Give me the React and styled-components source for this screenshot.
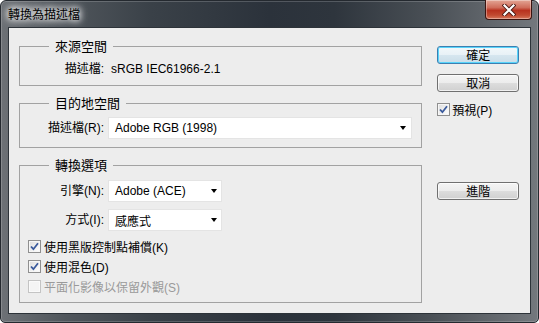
import styled, { createGlobalStyle } from "styled-components";

const GlobalStyle = createGlobalStyle`
  body {
    margin: 0;
    background: #ffffff;
    font-family: "Liberation Sans", "Noto Sans CJK TC", sans-serif;
  }
`;

const Window = styled.div`
  width: 539px;
  height: 323px;
  box-sizing: border-box;
  display: flex;
  flex-direction: column;
  padding: 0 7px 8px 7px;
  border: 1px solid #24292f;
  border-radius: 6px 6px 5px 5px;
  background: linear-gradient(
    90deg,
    #6d7176 0%,
    #50565c 12%,
    #3a4148 28%,
    #2b323b 50%,
    #2e353d 62%,
    #4a5056 80%,
    #74787d 100%
  );
  box-shadow: inset 0 0 0 1px rgba(255, 255, 255, 0.18);
`;

const TitleBar = styled.div`
  height: 27px;
  display: flex;
  justify-content: space-between;
  align-items: flex-start;
  margin-top: -1px;
`;

const Title = styled.div`
  margin-top: 7px;
  font-family: "Noto Sans CJK TC", sans-serif;
  font-size: 12px;
  line-height: 14px;
  color: #000;
  text-shadow: 0 0 6px #fff, 0 0 8px rgba(255, 255, 255, 0.9),
    0 0 10px rgba(255, 255, 255, 0.7);
`;

const CloseButton = styled.div`
  width: 45px;
  height: 19px;
  margin-right: -1px;
  display: flex;
  align-items: center;
  justify-content: center;
  border: 1px solid #3a1410;
  border-top: none;
  border-radius: 0 0 4px 4px;
  background: linear-gradient(
    180deg,
    #e3a595 0%,
    #cf6c5a 40%,
    #b8321f 55%,
    #c14a31 80%,
    #d7795e 100%
  );
  box-shadow: inset 0 0 0 1px rgba(255, 255, 255, 0.35);
`;

const Client = styled.div`
  flex: 1;
  display: flex;
  gap: 15px;
  padding: 11px 11px 10px 10px;
  background: #ededed;
  border: 1px solid #2d3339;
`;

const LeftColumn = styled.div`
  width: 405px;
  display: flex;
  flex-direction: column;
  gap: 10px;
`;

const Group = styled.fieldset`
  margin: 0;
  min-width: 0;
  padding: ${(p) => p.$pad || "8px 8px 8px 8px"};
  border: 1px solid #a2a2a2;
  display: flex;
  flex-direction: column;
`;

const Legend = styled.legend`
  margin-left: 21px;
  padding: 0 6px;
  font-family: "Noto Sans CJK TC", sans-serif;
  font-size: 13px;
  line-height: 14px;
  color: #000;
`;

const Row = styled.div`
  display: flex;
  align-items: center;
  height: ${(p) => p.$h || 22}px;
  margin-top: ${(p) => p.$mt || 0}px;
`;

const Label = styled.div`
  width: 76px;
  flex: none;
  text-align: right;
  font-size: 12px;
  line-height: 16px;
  color: #000;
  white-space: nowrap;
`;

const Value = styled.div`
  margin-left: 7px;
  font-size: 12px;
  line-height: 16px;
  color: #000;
`;

const Select = styled.div`
  margin-left: 4px;
  width: ${(p) => p.$w}px;
  height: 22px;
  box-sizing: border-box;
  display: flex;
  align-items: center;
  justify-content: space-between;
  padding: 0 4px 0 6px;
  background: #ffffff;
  border: 1px solid #e4e4e4;
  font-size: 12px;
  color: #000;
`;

const Arrow = styled.span`
  width: 0;
  height: 0;
  border-left: 3.5px solid transparent;
  border-right: 3.5px solid transparent;
  border-top: 4px solid #000;
  margin-right: ${(p) => p.$mr || 0}px;
`;

const CheckRow = styled.label`
  display: flex;
  align-items: center;
  gap: ${(p) => p.$gap || 3}px;
  height: ${(p) => p.$h || 20}px;
  margin-top: ${(p) => p.$mt || 0}px;
  font-size: 12px;
  color: ${(p) => (p.$disabled ? "#9a9a9a" : "#000")};
  white-space: nowrap;
`;

const Box = styled.span`
  width: 13px;
  height: 13px;
  box-sizing: border-box;
  display: flex;
  align-items: center;
  justify-content: center;
  border: 1px solid ${(p) => (p.$disabled ? "#c4c4c4" : "#8f8f8f")};
  background: ${(p) =>
    p.$disabled
      ? "#f4f4f4"
      : "linear-gradient(135deg, #dcdcdc 0%, #f2f2f2 60%, #ffffff 100%)"};
  box-shadow: inset 0 0 0 1px ${(p) => (p.$disabled ? "#fafafa" : "#f6f6f6")};
`;

const RightColumn = styled.div`
  width: 82px;
  display: flex;
  flex-direction: column;
`;

const Button = styled.div`
  height: 18px;
  box-sizing: border-box;
  margin-top: ${(p) => p.$mt || 0}px;
  display: flex;
  align-items: center;
  justify-content: center;
  border-radius: 3px;
  border: 1px solid ${(p) => (p.$default ? "#3c7fb1" : "#707070")};
  background: ${(p) =>
    p.$default
      ? "linear-gradient(180deg, #f2f8fb 0%, #e8f1f6 50%, #d6e6ef 51%, #cadde8 100%)"
      : "linear-gradient(180deg, #f4f4f4 0%, #ececec 50%, #dddddd 51%, #d0d0d0 100%)"};
  box-shadow: inset 0 0 0 1px
    ${(p) => (p.$default ? "#58d4fb" : "rgba(255,255,255,0.7)")};
  font-family: "Noto Sans CJK TC", sans-serif;
  font-size: 12px;
  line-height: 14px;
  color: #000;
`;

const Check = ({ checked, disabled }) => (
  <Box $disabled={disabled}>
    {checked && (
      <svg width="9" height="9" viewBox="0 0 9 9">
        <path
          d="M1 4.5 L3.4 7.2 L8 1.2"
          fill="none"
          stroke="#3a5a9c"
          strokeWidth="1.8"
        />
      </svg>
    )}
  </Box>
);

export default function App() {
  return (
    <>
      <GlobalStyle />
      <Window>
        <TitleBar>
          <Title>轉換為描述檔</Title>
          <CloseButton>
            <svg width="14" height="12" viewBox="0 0 14 12">
              <path
                d="M2.5 1.5 L11.5 10.5 M11.5 1.5 L2.5 10.5"
                stroke="#4a1a14"
                strokeWidth="4"
                strokeLinecap="square"
              />
              <path
                d="M2.5 1.5 L11.5 10.5 M11.5 1.5 L2.5 10.5"
                stroke="#ffffff"
                strokeWidth="2.2"
                strokeLinecap="square"
              />
            </svg>
          </CloseButton>
        </TitleBar>
        <Client>
          <LeftColumn>
            <Group>
              <Legend>來源空間</Legend>
              <Row $h={16}>
                <Label>描述檔:</Label>
                <Value>sRGB IEC61966-2.1</Value>
              </Row>
            </Group>
            <Group $pad="7px 8px 8px 8px">
              <Legend>目的地空間</Legend>
              <Row>
                <Label>描述檔(R):</Label>
                <Select $w={304}>
                  Adobe RGB (1998)
                  <Arrow $mr={1} />
                </Select>
              </Row>
            </Group>
            <Group $pad="8px 8px 6px 8px">
              <Legend>轉換選項</Legend>
              <Row>
                <Label>引擎(N):</Label>
                <Select $w={114}>
                  Adobe (ACE)
                  <Arrow />
                </Select>
              </Row>
              <Row $mt={7}>
                <Label>方式(I):</Label>
                <Select $w={114}>
                  感應式
                  <Arrow />
                </Select>
              </Row>
              <CheckRow $mt={5}>
                <Check checked />
                使用黑版控制點補償(K)
              </CheckRow>
              <CheckRow>
                <Check checked />
                使用混色(D)
              </CheckRow>
              <CheckRow $disabled>
                <Check disabled />
                平面化影像以保留外觀(S)
              </CheckRow>
            </Group>
          </LeftColumn>
          <RightColumn>
            <Button $default $mt={7}>
              確定
            </Button>
            <Button $mt={10}>取消</Button>
            <CheckRow $mt={9} $h={16} $gap={2}>
              <Check checked />
              預視(P)
            </CheckRow>
            <Button $mt={65}>進階</Button>
          </RightColumn>
        </Client>
      </Window>
    </>
  );
}
